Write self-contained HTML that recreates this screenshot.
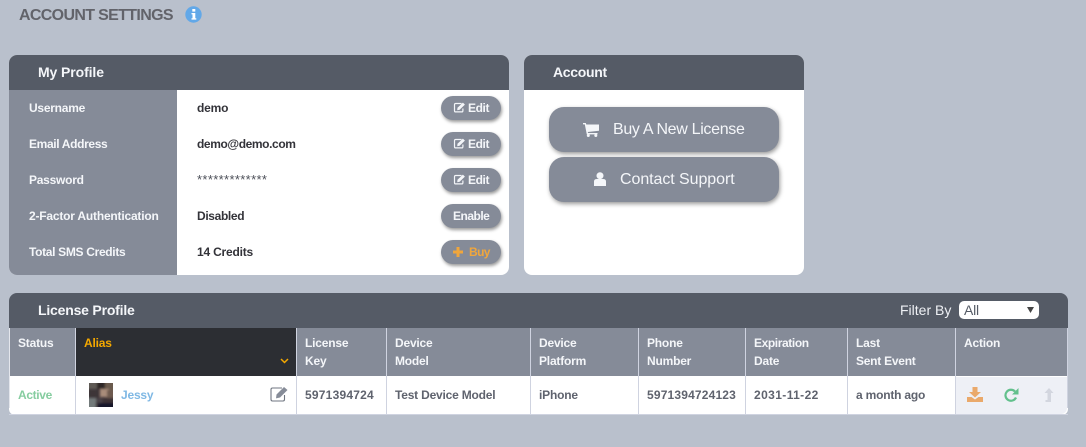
<!DOCTYPE html>
<html><head><meta charset="utf-8">
<style>
html,body{margin:0;padding:0}
body{width:1086px;height:447px;background:#b9c0cc;position:relative;overflow:hidden;font-family:"Liberation Sans",sans-serif;font-size:12px}
.a{position:absolute;white-space:nowrap}
.t{position:absolute;white-space:nowrap;font-weight:700;font-size:12px;line-height:16px;letter-spacing:-.2px}
.w{color:#f4f6f9}
.d{color:#333339}
.g{color:#5f636e}
.hd{position:absolute;background:#555b66}
.btn{position:absolute;left:441px;width:60px;height:24px;border-radius:12px;background:#858b98;box-shadow:1px 2px 3px rgba(0,0,0,.4);color:#f4f6f9;font-weight:700;font-size:12px;line-height:24px;letter-spacing:-.4px}
.big{position:absolute;left:549px;width:230px;height:45px;border-radius:15px;background:#858b98;box-shadow:1px 2px 4px rgba(0,0,0,.4);color:#f4f6f9;font-size:16px;line-height:45px}
.th{position:absolute;top:328px;height:48px;background:#858b98}
.v{position:absolute;width:1px;background:#cfd3e0}
svg{position:absolute;display:block}
</style></head><body>

<div class="a" style="left:19px;top:6px;font-size:16px;line-height:20px;font-weight:700;color:#62636a;letter-spacing:-.66px">ACCOUNT SETTINGS</div>
<svg style="left:185px;top:6px" width="17" height="17" viewBox="0 0 17 17"><circle cx="8.5" cy="8.5" r="8.2" fill="#62a8e8"/><rect x="7.300" y="3" width="3" height="2.600" fill="#fff"/><path d="M6.500 7h3.800v5.200h1v1.400H6.500v-1.400h1V8.400h-1z" fill="#fff"/></svg>

<!-- My Profile -->
<div class="a" style="left:9px;top:55px;width:500px;height:220px;background:#fff;border-radius:8px"></div>
<div class="hd" style="left:9px;top:55px;width:500px;height:35px;border-radius:8px 8px 0 0"></div>
<div class="a" style="left:9px;top:90px;width:168px;height:185px;background:#858b98;border-radius:0 0 0 8px"></div>
<div class="t w" style="left:38px;top:64px;font-size:14px;letter-spacing:-.1px">My Profile</div>

<div class="t w" style="left:29px;top:100px;letter-spacing:-.25px">Username</div>
<div class="t w" style="left:29px;top:136px;letter-spacing:-.35px">Email Address</div>
<div class="t w" style="left:29px;top:172px;letter-spacing:-.25px">Password</div>
<div class="t w" style="left:29px;top:208px;letter-spacing:-.2px">2-Factor Authentication</div>
<div class="t w" style="left:29px;top:244px;letter-spacing:-.32px">Total SMS Credits</div>

<div class="t d" style="left:197px;top:100px">demo</div>
<div class="t d" style="left:197px;top:136px;letter-spacing:-.4px">demo@demo.com</div>
<div class="t d" style="left:197px;top:172px;color:#4d5059;font-weight:400;font-size:13px;letter-spacing:.35px">*************</div>
<div class="t d" style="left:197px;top:208px;letter-spacing:-.35px">Disabled</div>
<div class="t d" style="left:197px;top:244px">14 Credits</div>

<div class="btn" style="top:96px"><svg style="left:12px;top:6px" width="13" height="11" viewBox="0 0 12 11"><path d="M8 1.500H2.200q-1.200 0-1.200 1.200v6q0 1.200 1.200 1.200h6q1.200 0 1.200-1.200V6.500" fill="none" stroke="#f4f6f9" stroke-width="1.200"/><path d="M4 5.800 9.400.6l2 2-5.300 5.200L3.700 8.300z" fill="#f4f6f9"/></svg><span class="a" style="left:27px;top:0">Edit</span></div>
<div class="btn" style="top:132px"><svg style="left:12px;top:6px" width="13" height="11" viewBox="0 0 12 11"><path d="M8 1.500H2.200q-1.200 0-1.200 1.200v6q0 1.200 1.200 1.200h6q1.200 0 1.200-1.200V6.500" fill="none" stroke="#f4f6f9" stroke-width="1.200"/><path d="M4 5.800 9.400.6l2 2-5.300 5.200L3.700 8.300z" fill="#f4f6f9"/></svg><span class="a" style="left:27px;top:0">Edit</span></div>
<div class="btn" style="top:168px"><svg style="left:12px;top:6px" width="13" height="11" viewBox="0 0 12 11"><path d="M8 1.500H2.200q-1.200 0-1.200 1.200v6q0 1.200 1.200 1.200h6q1.200 0 1.200-1.200V6.500" fill="none" stroke="#f4f6f9" stroke-width="1.200"/><path d="M4 5.800 9.400.6l2 2-5.300 5.200L3.700 8.300z" fill="#f4f6f9"/></svg><span class="a" style="left:27px;top:0">Edit</span></div>
<div class="btn" style="top:204px"><span class="a" style="left:12px;top:0;letter-spacing:-.5px">Enable</span></div>
<div class="btn" style="top:240px;color:#f0a63c"><svg style="left:12px;top:7px" width="10" height="10" viewBox="0 0 10 10"><path d="M3.500 0h3v3.500H10v3H6.500V10h-3V6.500H0v-3h3.500z" fill="#f0a63c"/></svg><span class="a" style="left:28px;top:0;letter-spacing:-.6px">Buy</span></div>

<!-- Account -->
<div class="a" style="left:524px;top:55px;width:280px;height:220px;background:#fff;border-radius:8px"></div>
<div class="hd" style="left:524px;top:55px;width:280px;height:35px;border-radius:8px 8px 0 0"></div>
<div class="t w" style="left:553px;top:64px;font-size:14px;letter-spacing:-.3px">Account</div>

<div class="big" style="top:107px"><svg style="left:34px;top:16px" width="16" height="14" viewBox="0 0 16 14"><path d="M0 0h2.800l.5 1.500H16v6.200L4.800 9l.2 1h9.500v1.400H3.800L1.800 1.400H0z" fill="#f4f6f9"/><circle cx="5.300" cy="12.500" r="1.500" fill="#f4f6f9"/><circle cx="12.800" cy="12.500" r="1.500" fill="#f4f6f9"/></svg><span class="a" style="left:64px;top:0;letter-spacing:-.32px">Buy A New License</span></div>
<div class="big" style="top:157px"><svg style="left:45px;top:15px" width="12" height="14" viewBox="0 0 12 14"><circle cx="6" cy="3.700" r="3.500" fill="#f4f6f9"/><path d="M0 14V9.500Q0 7 3 7h6q3 0 3 2.500V14z" fill="#f4f6f9"/></svg><span class="a" style="left:71px;top:0;letter-spacing:-.07px">Contact Support</span></div>

<!-- License Profile -->
<div class="hd" style="left:9px;top:293px;width:1059px;height:35px;border-radius:8px 8px 0 0"></div>
<div class="t w" style="left:38px;top:302px;font-size:14px">License Profile</div>
<div class="a" style="left:900px;top:302px;font-size:14px;line-height:16px;color:#eef0f4">Filter By</div>
<div class="a" style="left:959px;top:301px;width:80px;height:18px;background:#fff;border-radius:5px;color:#555b66;font-size:14px;line-height:18px"><span style="position:absolute;left:5px;letter-spacing:-.2px">All</span><svg style="left:68px;top:6px" width="7" height="6" viewBox="0 0 7 6"><path d="M0 0h7L3.500 6z" fill="#444"/></svg></div>

<div class="a" style="left:9px;top:328px;width:1059px;height:87px;background:#fff;border-radius:0 0 6px 6px"></div>
<div class="a" style="left:956px;top:377px;width:111px;height:37px;background:#eef0f6;border-radius:0 0 6px 0"></div>
<div class="a" style="left:9px;top:414px;width:1059px;height:1px;background:#cfd3e0"></div>

<div class="th" style="left:10px;width:65px"></div>
<div class="th" style="left:76px;width:220px;background:#2c2e33"></div>
<div class="th" style="left:297px;width:89px"></div>
<div class="th" style="left:387px;width:143px"></div>
<div class="th" style="left:531px;width:107px"></div>
<div class="th" style="left:639px;width:106px"></div>
<div class="th" style="left:746px;width:101px"></div>
<div class="th" style="left:848px;width:107px"></div>
<div class="th" style="left:956px;width:111px"></div>

<div class="v" style="left:9px;top:328px;height:80px;background:#e4e6ec"></div>
<div class="v" style="left:75px;top:328px;height:86px"></div>
<div class="v" style="left:296px;top:328px;height:86px"></div>
<div class="v" style="left:386px;top:328px;height:86px"></div>
<div class="v" style="left:530px;top:328px;height:86px"></div>
<div class="v" style="left:638px;top:328px;height:86px"></div>
<div class="v" style="left:745px;top:328px;height:86px"></div>
<div class="v" style="left:847px;top:328px;height:86px"></div>
<div class="v" style="left:955px;top:328px;height:86px"></div>
<div class="v" style="left:1067px;top:328px;height:80px"></div>

<div class="t w" style="left:18px;top:335px;letter-spacing:-.2px">Status</div>
<div class="t" style="left:84px;top:335px;color:#f4a800">Alias</div>
<svg style="left:280px;top:358px" width="9" height="6" viewBox="0 0 9 6"><path d="M1 1l3.500 3.500L8 1" fill="none" stroke="#f4a800" stroke-width="1.500"/></svg>
<div class="t w" style="left:305px;top:335px">License</div><div class="t w" style="left:305px;top:353px">Key</div>
<div class="t w" style="left:395px;top:335px">Device</div><div class="t w" style="left:395px;top:353px">Model</div>
<div class="t w" style="left:539px;top:335px">Device</div><div class="t w" style="left:539px;top:353px">Platform</div>
<div class="t w" style="left:647px;top:335px">Phone</div><div class="t w" style="left:647px;top:353px">Number</div>
<div class="t w" style="left:754px;top:335px;letter-spacing:-.4px">Expiration</div><div class="t w" style="left:754px;top:353px">Date</div>
<div class="t w" style="left:856px;top:335px">Last</div><div class="t w" style="left:856px;top:353px;letter-spacing:-.25px">Sent Event</div>
<div class="t w" style="left:964px;top:335px">Action</div>

<div class="t" style="left:18px;top:387px;color:#86cda0;letter-spacing:-.35px">Active</div>
<svg style="left:89px;top:383px" width="24" height="24" viewBox="0 0 24 24"><defs><filter id="b"><feGaussianBlur stdDeviation="1.100"/></filter></defs><rect width="24" height="24" fill="#3f363a"/><g filter="url(#b)"><rect x="-2" y="-2" width="10" height="8" fill="#5f5a55"/><rect x="8" y="-2" width="8" height="8" fill="#2f2527"/><rect x="16" y="-2" width="10" height="9" fill="#6a5a4e"/><rect x="11" y="6" width="9" height="8" fill="#a98c7a"/><rect x="0" y="7" width="9" height="7" fill="#3e3638"/><rect x="18" y="7" width="8" height="8" fill="#6e5a4f"/><rect x="-2" y="15" width="9" height="11" fill="#737a7a"/><rect x="7" y="15" width="6" height="5" fill="#4a4346"/><rect x="9" y="20" width="17" height="6" fill="#171829"/><rect x="15" y="15" width="11" height="5" fill="#3c3034"/></g></svg>
<div class="t" style="left:121px;top:387px;color:#7fb8e4">Jessy</div>
<svg style="left:270px;top:386px" width="19" height="16" viewBox="0 0 19 16"><path d="M12 2H2.500Q1 2 1 3.500v9.800Q1 15 2.500 15h10.500q1.500 0 1.500-1.700V9" fill="none" stroke="#6f7580" stroke-width="1.100"/><path d="M6.500 8.500 14 1l3.500 3-7.500 7.500-4 .9z" fill="#868c98"/></svg>
<div class="t g" style="left:305px;top:387px;letter-spacing:.22px">5971394724</div>
<div class="t g" style="left:395px;top:387px">Test Device Model</div>
<div class="t g" style="left:539px;top:387px">iPhone</div>
<div class="t g" style="left:647px;top:387px;letter-spacing:.17px">5971394724123</div>
<div class="t g" style="left:754px;top:387px;letter-spacing:.4px">2031-11-22</div>
<div class="t g" style="left:856px;top:387px">a month ago</div>

<svg style="left:967px;top:387px" width="16" height="15" viewBox="0 0 16 15"><path d="M5.500 0h5v5H14L8 10.500 2 5h3.500z" fill="#eaa96b"/><path d="M0 10h4.500L8 12.500 11.500 10H16v5H0z" fill="#eaa96b"/></svg>
<svg style="left:1004px;top:388px" width="15" height="14" viewBox="0 0 15 14"><path d="M12 9.500A5.500 5.500 0 1 1 11 3.500" fill="none" stroke="#62c08c" stroke-width="2.200"/><path d="M14.500 0v6.500H8z" fill="#62c08c"/></svg>
<svg style="left:1044px;top:388px" width="10" height="14" viewBox="0 0 10 14"><path d="M5 0l4.500 5H7v9H1.500v-2H3.500V5H.5z" fill="#d3d6df"/></svg>

</body></html>
